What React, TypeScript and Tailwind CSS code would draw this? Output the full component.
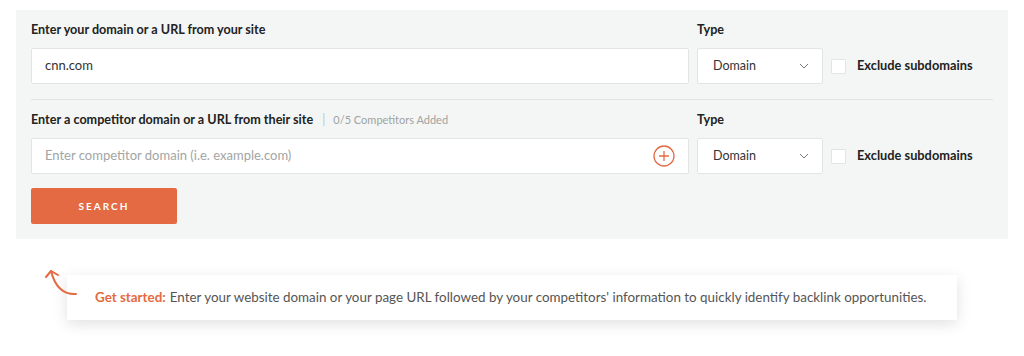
import React from 'react';

const font = { fontFamily: 'Lato, "Open Sans", sans-serif' };

const Chevron = () => (
    <svg width="10" height="6" viewBox="0 0 10 6" fill="none" stroke="#777" strokeWidth="1">
        <path d="M1 1l4 4 4-4" />
    </svg>
);

const TypeSelect = () => (
    <div className="w-[126px] h-[36px] bg-white border border-[#e3e5e4] rounded-[2px] flex items-center justify-between pl-[15px] pr-[13px]">
        <span className="text-[12.5px] text-[#333]">Domain</span>
        <Chevron />
    </div>
);

const Exclude = () => (
    <div className="flex items-center ml-[8px]">
        <div className="w-[15px] h-[15px] bg-white border border-[#e3e5e4] rounded-[1px]" />
        <span className="ml-[11px] text-[12.8px] font-bold text-[#222]">Exclude subdomains</span>
    </div>
);

export default function App() {
    return (
        <div className="w-[1024px] h-[356px] bg-white pt-[10px]" style={font}>
            {/* Search panel */}
            <div className="ml-[16px] w-[992px] h-[229px] bg-[#f4f6f5] px-[15px] pt-[12px]">
                <div className="flex">
                    <div className="w-[658px]">
                        <div className="h-[16px] leading-[16px] text-[12.6px] font-bold text-[#222]">Enter your domain or a URL from your site</div>
                        <div className="mt-[10px] h-[36px] bg-white border border-[#e3e5e4] rounded-[2px] flex items-center px-[13px] text-[13px] text-[#333]">cnn.com</div>
                    </div>
                    <div className="ml-[8px]">
                        <div className="h-[16px] leading-[16px] text-[12.6px] font-bold text-[#222]">Type</div>
                        <div className="mt-[10px] flex items-center">
                            <TypeSelect />
                            <Exclude />
                        </div>
                    </div>
                </div>

                <div className="mt-[15px] w-[962px] h-px bg-[#e2e4e3]" />

                <div className="flex mt-[12px]">
                    <div className="w-[658px]">
                        <div className="h-[16px] leading-[16px] text-[12.6px] font-bold text-[#222] flex items-center">
                            Enter a competitor domain or a URL from their site
                            <span className="ml-[9px] text-[#c4c6c5] font-normal">|</span>
                            <span className="ml-[8px] text-[11px] font-normal text-[#9fa3a1]">0/5 Competitors Added</span>
                        </div>
                        <div className="mt-[10px] h-[36px] bg-white border border-[#e3e5e4] rounded-[2px] flex items-center justify-between pl-[13px] pr-[13px] text-[13px] text-[#a2a5a4]">
                            <span>Enter competitor domain (i.e. example.com)</span>
                            <svg width="22" height="22" viewBox="0 0 22 22" fill="none" stroke="#e36a43" strokeWidth="1.3">
                                <circle cx="11" cy="11" r="10" />
                                <path d="M11 6v10M6 11h10" />
                            </svg>
                        </div>
                    </div>
                    <div className="ml-[8px]">
                        <div className="h-[16px] leading-[16px] text-[12.6px] font-bold text-[#222]">Type</div>
                        <div className="mt-[10px] flex items-center">
                            <TypeSelect />
                            <Exclude />
                        </div>
                    </div>
                </div>

                <button className="mt-[14px] w-[146px] h-[36px] bg-[#e36a43] rounded-[2px] text-white text-[10px] font-bold tracking-[0.2em]">
                    SEARCH
                </button>
            </div>

            {/* Get started hint */}
            <div className="relative mt-[36px] ml-[67px] w-[890px] h-[45px] bg-white shadow-[0_4px_14px_rgba(0,0,0,0.12)] flex items-center pl-[28px] text-[13.4px] text-[#555]">
                <svg className="absolute left-[-24px] top-[-7px]" width="36" height="30" viewBox="0 0 36 30" fill="none" stroke="#e36a43" strokeWidth="2" strokeLinecap="round" strokeLinejoin="round">
                    <path d="M33 26 Q14 27 8 3" />
                    <path d="M3 9 L8 3 L15 7" />
                </svg>
                <span className="font-bold text-[#e36a43] mr-[4px]">Get started:</span>
                Enter your website domain or your page URL followed by your competitors' information to quickly identify backlink opportunities.
            </div>
        </div>
    );
}
